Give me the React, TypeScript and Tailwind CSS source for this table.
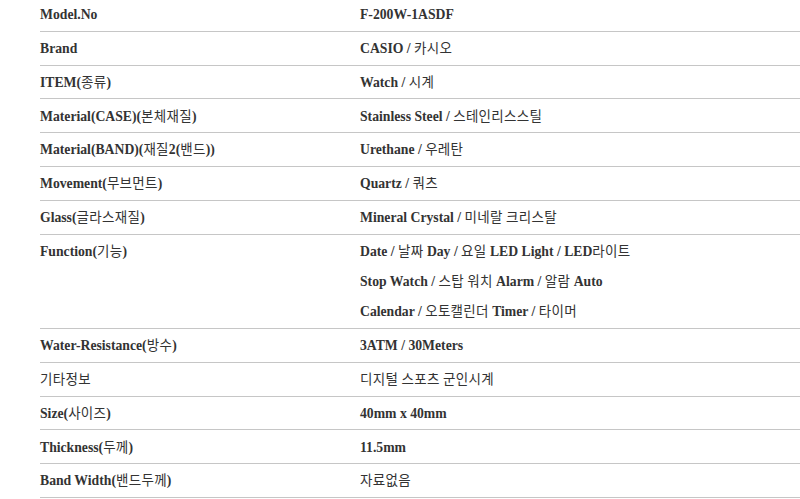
import React from 'react';

const rows: { label: string; value: string[] }[] = [
  { label: 'Model.No', value: ['F-200W-1ASDF'] },
  { label: 'Brand', value: ['CASIO / 카시오'] },
  { label: 'ITEM(종류)', value: ['Watch / 시계'] },
  { label: 'Material(CASE)(본체재질)', value: ['Stainless Steel / 스테인리스스틸'] },
  { label: 'Material(BAND)(재질2(밴드))', value: ['Urethane / 우레탄'] },
  { label: 'Movement(무브먼트)', value: ['Quartz / 쿼츠'] },
  { label: 'Glass(글라스재질)', value: ['Mineral Crystal / 미네랄 크리스탈'] },
  {
    label: 'Function(기능)',
    value: [
      'Date / 날짜 Day / 요일 LED Light / LED라이트',
      'Stop Watch / 스탑 워치 Alarm / 알람 Auto',
      'Calendar / 오토캘린더 Timer / 타이머',
    ],
  },
  { label: 'Water-Resistance(방수)', value: ['3ATM / 30Meters'] },
  { label: '기타정보', value: ['디지털 스포츠 군인시계'] },
  { label: 'Size(사이즈)', value: ['40mm x 40mm'] },
  { label: 'Thickness(두께)', value: ['11.5mm'] },
  { label: 'Band Width(밴드두께)', value: ['자료없음'] },
];

// hangul runs get the regular-weight korean face
const Mixed = ({ text }: { text: string }) => {
  const parts = text.split(/([\uAC00-\uD7A3\u3131-\u318E]+(?:\s+[\uAC00-\uD7A3\u3131-\u318E]+)*)/);
  return (
    <>
      {parts.map((p, i) =>
        /[\uAC00-\uD7A3]/.test(p) ? (
          <span key={i} className="font-normal leading-none text-[13.5px] tracking-[0.3px] font-['Noto_Sans_CJK_KR',sans-serif]">
            {p}
          </span>
        ) : (
          <span key={i}>{p}</span>
        )
      )}
    </>
  );
};

export default function App() {
  return (
    <div className="w-[800px] h-[499px] overflow-hidden bg-white">
      <div className="-mt-[2px] ml-[40px] text-[13.7px] font-bold text-[#333] font-['Liberation_Serif',serif]">
        {rows.map(row => (
          <div key={row.label} className="flex border-b border-[#c6c6c6] pt-[2.25px] pb-[0.25px]">
            <div className="w-[320px] h-[30.3px] leading-[30.3px]">
              <Mixed text={row.label} />
            </div>
            <div className="flex-1">
              {row.value.map(line => (
                <div key={line} className="h-[30.3px] leading-[30.3px]">
                  <Mixed text={line} />
                </div>
              ))}
            </div>
          </div>
        ))}
      </div>
    </div>
  );
}
